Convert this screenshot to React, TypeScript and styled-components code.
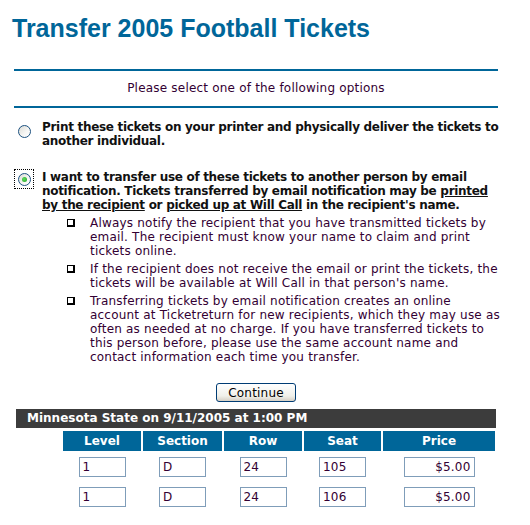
import { Fragment } from "react";
import styled, { createGlobalStyle } from "styled-components";

const GlobalStyle = createGlobalStyle`
  html, body {
    margin: 0;
    padding: 0;
    background: #fff;
  }
  body {
    font-family: "DejaVu Sans", Verdana, sans-serif;
    font-size: 12px;
    letter-spacing: 0.2px;
    color: #330033;
  }
`;

const Page = styled.div`
  width: 530px;
  padding: 15px 0 0 0;
`;

const Title = styled.h1`
  margin: 0 0 0 12px;
  font-family: "Liberation Sans", Tahoma, Arial, sans-serif;
  font-size: 25px;
  font-weight: bold;
  letter-spacing: 0;
  line-height: 26px;
  color: #006699;
`;

const Panel = styled.div`
  width: 484px;
  margin: 28px 0 0 14px;
`;

const Prompt = styled.div`
  border-top: 2px solid #006699;
  border-bottom: 2px solid #006699;
  padding: 10px 0 11px;
  text-align: center;
  line-height: 14px;
`;

const Options = styled.div`
  display: flex;
  flex-direction: column;
  gap: 22px;
  margin-top: 12px;
  margin-right: -8px;
`;

const Option = styled.label`
  display: grid;
  grid-template-columns: 28px 1fr;
  align-items: start;
  font-weight: bold;
  letter-spacing: -0.3px;
  color: #111;
  line-height: 14px;
`;

const RadioBox = styled.span<{ $focused?: boolean }>`
  display: flex;
  align-items: center;
  justify-content: center;
  width: 20px;
  height: 20px;
  margin-top: ${(p) => (p.$focused ? "-1px" : "1px")};
  box-sizing: border-box;
  border: 1px dotted ${(p) => (p.$focused ? "#000" : "transparent")};
`;

const Radio = styled.span<{ $checked?: boolean }>`
  width: 13px;
  height: 13px;
  box-sizing: border-box;
  border-radius: 50%;
  border: 1px solid #1c5180;
  background: linear-gradient(135deg, #dcdcd6 0%, #f6f6f4 60%, #ffffff 100%);
  display: flex;
  align-items: center;
  justify-content: center;

  &::after {
    content: "";
    display: ${(p) => (p.$checked ? "block" : "none")};
    width: 5px;
    height: 5px;
    border-radius: 50%;
    background: radial-gradient(circle at 40% 40%, #5fdc5f, #21a121);
  }
`;

const U = styled.span`
  text-decoration: underline;
`;

const Bullets = styled.ul`
  list-style: none;
  margin: 4px -5px 0 53px;
  padding: 0;
  display: flex;
  flex-direction: column;
  gap: 4px;
`;

const Bullet = styled.li`
  display: grid;
  grid-template-columns: 23px 1fr;
  line-height: 14px;
`;

const BulletMark = styled.span`
  width: 8px;
  height: 8px;
  margin-top: 3px;
  box-sizing: border-box;
  border: 1px solid #000;
  border-bottom-width: 2px;
  border-right-width: 2px;
`;

const ButtonRow = styled.div`
  display: flex;
  justify-content: center;
  margin-top: 19px;
`;

const Button = styled.button`
  width: 80px;
  height: 19px;
  padding: 0;
  font-family: "DejaVu Sans", Verdana, sans-serif;
  font-size: 12px;
  letter-spacing: 0.2px;
  color: #000;
  border: 1px solid #003c74;
  border-radius: 3px;
  background: linear-gradient(#ffffff 0%, #f0f0ea 70%, #d6d0c5 100%);
`;

const EventBar = styled.div`
  margin: 7px 2px 0;
  background: #3c3c3c;
  color: #fff;
  font-weight: bold;
  letter-spacing: 0;
  height: 19px;
  line-height: 19px;
  padding-left: 11px;
`;

const Grid = styled.div`
  display: grid;
  grid-template-columns: 45px 78px 79px 78px 77px 112px;
  column-gap: 2px;
  margin: 3px 2px 0;
  align-items: center;
`;

const HeadCell = styled.div`
  background: #006699;
  color: #fff;
  font-weight: bold;
  letter-spacing: 0;
  text-align: center;
  height: 20px;
  line-height: 20px;
`;

const Cell = styled.div`
  display: flex;
  justify-content: center;
  padding: 6px 0 4px;
`;

const Field = styled.input<{ $wide?: boolean }>`
  width: ${(p) => (p.$wide ? "71px" : "47px")};
  height: 20px;
  box-sizing: border-box;
  border: 1px solid #7f9db9;
  padding: 0 3px;
  font-family: "DejaVu Sans", Verdana, sans-serif;
  font-size: 12px;
  letter-spacing: 0.2px;
  color: #330033;
  text-align: ${(p) => (p.$wide ? "right" : "left")};
  background: #fff;
  outline: none;
`;

const tickets = [
  { level: "1", section: "D", row: "24", seat: "105", price: "$5.00" },
  { level: "1", section: "D", row: "24", seat: "106", price: "$5.00" },
];

export default function App() {
  return (
    <Page>
      <GlobalStyle />
      <Title>Transfer 2005 Football Tickets</Title>
      <Panel>
        <Prompt>Please select one of the following options</Prompt>
        <Options>
          <Option>
            <RadioBox>
              <Radio />
            </RadioBox>
            <span>
              Print these tickets on your printer and physically deliver the
              tickets to another individual.
            </span>
          </Option>
          <Option>
            <RadioBox $focused>
              <Radio $checked />
            </RadioBox>
            <span>
              I want to transfer use of these tickets to another person by
              email notification. Tickets transferred by email notification may
              be <U>printed by the recipient</U> or <U>picked up at Will Call</U>{" "}
              in the recipient's name.
            </span>
          </Option>
        </Options>
        <Bullets>
          <Bullet>
            <BulletMark />
            <span>
              Always notify the recipient that you have transmitted tickets by
              email. The recipient must know your name to claim and print
              tickets online.
            </span>
          </Bullet>
          <Bullet>
            <BulletMark />
            <span>
              If the recipient does not receive the email or print the tickets,
              the tickets will be available at Will Call in that person's name.
            </span>
          </Bullet>
          <Bullet>
            <BulletMark />
            <span>
              Transferring tickets by email notification creates an online
              account at Ticketreturn for new recipients, which they may use as
              often as needed at no charge. If you have transferred tickets to
              this person before, please use the same account name and contact
              information each time you transfer.
            </span>
          </Bullet>
        </Bullets>
        <ButtonRow>
          <Button type="button">Continue</Button>
        </ButtonRow>
        <EventBar>Minnesota State on 9/11/2005 at 1:00 PM</EventBar>
        <Grid>
          <span />
          <HeadCell>Level</HeadCell>
          <HeadCell>Section</HeadCell>
          <HeadCell>Row</HeadCell>
          <HeadCell>Seat</HeadCell>
          <HeadCell>Price</HeadCell>
          {tickets.map((t) => (
            <Fragment key={t.seat}>
              <span />
              <Cell>
                <Field defaultValue={t.level} />
              </Cell>
              <Cell>
                <Field defaultValue={t.section} />
              </Cell>
              <Cell>
                <Field defaultValue={t.row} />
              </Cell>
              <Cell>
                <Field defaultValue={t.seat} />
              </Cell>
              <Cell>
                <Field $wide defaultValue={t.price} />
              </Cell>
            </Fragment>
          ))}
        </Grid>
      </Panel>
    </Page>
  );
}
